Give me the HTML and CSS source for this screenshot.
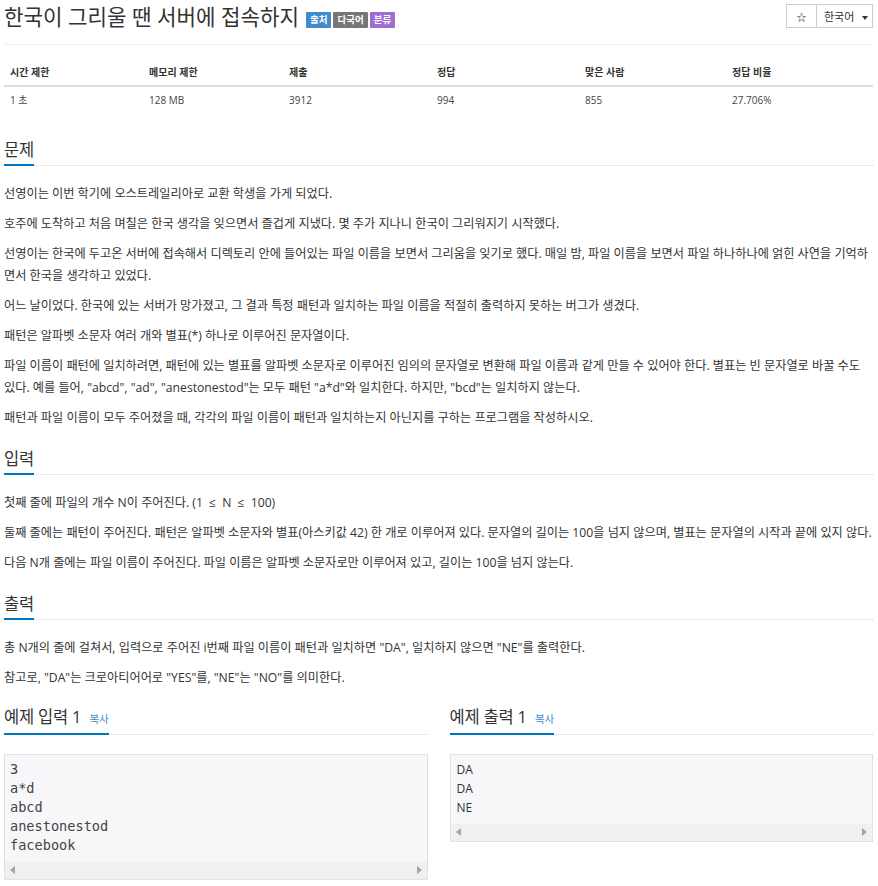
FILE: index.html
```
<!DOCTYPE html>
<html lang="ko">
<head>
    <meta charset="UTF-8">
    <meta name="viewport" content="width=device-width, initial-scale=1.0">
    <title>한국이 그리울 땐 서버에 접속하지</title>
    <link rel="stylesheet" href="styles.css">
</head>
<body>
    <div class="container">
        <div class="page-header">
            <div class="title-row">
                <h1 class="problem-title">한국이 그리울 땐 서버에 접속하지</h1>
                <span class="label label-blue">출처</span>
                <span class="label label-gray">다국어</span>
                <span class="label label-purple">분류</span>
            </div>
            <div class="btn-group">
                <button class="btn btn-star">☆</button>
                <button class="btn btn-lang">한국어 <span class="caret"></span></button>
            </div>
        </div>

        <table class="problem-info">
            <thead>
                <tr>
                    <th>시간 제한</th>
                    <th>메모리 제한</th>
                    <th>제출</th>
                    <th>정답</th>
                    <th>맞은 사람</th>
                    <th>정답 비율</th>
                </tr>
            </thead>
            <tbody>
                <tr>
                    <td>1 초</td>
                    <td>128 MB</td>
                    <td>3912</td>
                    <td>994</td>
                    <td>855</td>
                    <td>27.706%</td>
                </tr>
            </tbody>
        </table>

        <section class="section first">
            <div class="headline"><h2>문제</h2></div>
            <div class="problem-text">
                <p>선영이는 이번 학기에 오스트레일리아로 교환 학생을 가게 되었다.</p>
                <p>호주에 도착하고 처음 며칠은 한국 생각을 잊으면서 즐겁게 지냈다. 몇 주가 지나니 한국이 그리워지기 시작했다.</p>
                <p>선영이는 한국에 두고온 서버에 접속해서 디렉토리 안에 들어있는 파일 이름을 보면서 그리움을 잊기로 했다. 매일 밤, 파일 이름을 보면서 파일 하나하나에 얽힌 사연을 기억하면서 한국을 생각하고 있었다.</p>
                <p>어느 날이었다. 한국에 있는 서버가 망가졌고, 그 결과 특정 패턴과 일치하는 파일 이름을 적절히 출력하지 못하는 버그가 생겼다.</p>
                <p>패턴은 알파벳 소문자 여러 개와 별표(*) 하나로 이루어진 문자열이다.</p>
                <p>파일 이름이 패턴에 일치하려면, 패턴에 있는 별표를 알파벳 소문자로 이루어진 임의의 문자열로 변환해 파일 이름과 같게 만들 수 있어야 한다. 별표는 빈 문자열로 바꿀 수도 있다. 예를 들어, "abcd", "ad", "anestonestod"는 모두 패턴 "a*d"와 일치한다. 하지만, "bcd"는 일치하지 않는다.</p>
                <p>패턴과 파일 이름이 모두 주어졌을 때, 각각의 파일 이름이 패턴과 일치하는지 아닌지를 구하는 프로그램을 작성하시오.</p>
            </div>
        </section>

        <section class="section">
            <div class="headline"><h2>입력</h2></div>
            <div class="problem-text">
                <p>첫째 줄에 파일의 개수 N이 주어진다. (1 <span class="math">≤</span> N <span class="math">≤</span> 100)</p>
                <p>둘째 줄에는 패턴이 주어진다. 패턴은 알파벳 소문자와 별표(아스키값 42) 한 개로 이루어져 있다. 문자열의 길이는 100을 넘지 않으며, 별표는 문자열의 시작과 끝에 있지 않다.</p>
                <p>다음 N개 줄에는 파일 이름이 주어진다. 파일 이름은 알파벳 소문자로만 이루어져 있고, 길이는 100을 넘지 않는다.</p>
            </div>
        </section>

        <section class="section">
            <div class="headline"><h2>출력</h2></div>
            <div class="problem-text">
                <p>총 N개의 줄에 걸쳐서, 입력으로 주어진 i번째 파일 이름이 패턴과 일치하면 "DA", 일치하지 않으면 "NE"를 출력한다.</p>
                <p>참고로, "DA"는 크로아티어어로 "YES"를, "NE"는 "NO"를 의미한다.</p>
            </div>
        </section>

        <div class="samples">
            <section class="section sample">
                <div class="headline"><h2>예제 입력 1 <a class="copy" href="#">복사</a></h2></div>
                <div class="sample-box">
                    <pre class="sample-data">3
a*d
abcd
anestonestod
facebook</pre>
                    <div class="scrollbar"><span class="arrow-left"></span><span class="arrow-right"></span></div>
                </div>
            </section>
            <section class="section sample">
                <div class="headline"><h2>예제 출력 1 <a class="copy" href="#">복사</a></h2></div>
                <div class="sample-box">
                    <pre class="sample-data output">DA
DA
NE</pre>
                    <div class="scrollbar"><span class="arrow-left"></span><span class="arrow-right"></span></div>
                </div>
            </section>
        </div>
    </div>
</body>
</html>
```
FILE: styles.css
```
body {
    margin: 0;
    font-family: "Open Sans", "Noto Sans CJK KR", sans-serif;
    color: #333;
    background: #fff;
}
.container {
    width: 869px;
    padding: 4px 5px 0 4px;
}
.page-header {
    display: flex;
    justify-content: space-between;
    align-items: flex-start;
    padding-bottom: 14px;
    border-bottom: 1px solid #eee;
}
.title-row {
    display: flex;
    align-items: center;
}
.problem-title {
    margin: 0 7px 0 0;
    font-size: 21.2px;
    line-height: 26px;
    font-weight: normal;
    color: #333;
}
.label {
    margin: 6px 2px 0 0;
    padding: 0 4px;
    height: 16px;
    line-height: 16px;
    font-size: 9.5px;
    font-weight: bold;
    color: #fff;
    border-radius: 1px;
}
.label-blue {
    background: #428bca;
}
.label-gray {
    background: #777;
}
.label-purple {
    background: #9f6cd0;
}
.btn-group {
    display: flex;
}
.btn {
    height: 24px;
    padding: 0;
    border: 1px solid #ccc;
    background: #fff;
    color: #333;
    font-family: "Open Sans", "Noto Sans CJK KR", sans-serif;
    cursor: pointer;
}
.btn-star {
    width: 31px;
    font-size: 10px;
}
.btn-lang {
    width: 57px;
    margin-left: -1px;
    font-size: 11px;
    text-align: left;
    padding-left: 7px;
}
.caret {
    display: inline-block;
    margin-left: 5px;
    vertical-align: middle;
    border-top: 4px solid #333;
    border-left: 3.5px solid transparent;
    border-right: 3.5px solid transparent;
}
.problem-info {
    width: 869px;
    margin-top: 14px;
    border-collapse: collapse;
    table-layout: fixed;
    font-size: 10px;
}
.problem-info th,
.problem-info td {
    padding: 5px 6px;
    line-height: 16px;
    text-align: left;
}
.problem-info th {
    font-weight: bold;
    border-bottom: 2px solid #ddd;
}
.problem-info td {
    color: #444;
}
.problem-info th:nth-child(1) { width: 127px; }
.problem-info th:nth-child(2) { width: 128px; }
.problem-info th:nth-child(3) { width: 136px; }
.problem-info th:nth-child(4) { width: 136px; }
.problem-info th:nth-child(5) { width: 135px; }
.section {
    margin-top: 19px;
}
.section.first {
    margin-top: 26px;
}
.headline {
    border-bottom: 1px dotted #d6d6d6;
    margin-bottom: 17px;
}
.headline h2 {
    display: inline-block;
    margin: 0 0 -1px;
    padding-bottom: 3px;
    font-size: 16.5px;
    line-height: 22px;
    font-weight: normal;
    letter-spacing: -0.2px;
    border-bottom: 2px solid #0076c0;
}
.problem-text p {
    margin: 0 0 8px;
    font-size: 12.2px;
    line-height: 22px;
}
.math {
    padding: 0 3px;
}
.samples {
    display: grid;
    grid-template-columns: 1fr 1fr;
    column-gap: 22px;
}
.section.sample {
    margin-top: 9px;
}
.sample .headline {
    margin-bottom: 19px;
}
.copy {
    font-size: 10.5px;
    color: #428bca;
    text-decoration: none;
    letter-spacing: 0;
    margin-left: 4px;
}
.sample-box {
    border: 1px solid #e1e1e8;
    background: #f7f7f9;
}
.sample-data {
    margin: 0;
    padding: 4.5px 5px 7px;
    font-family: "DejaVu Sans Mono", monospace;
    font-size: 13.6px;
    line-height: 19px;
    color: #444;
}
.sample-data.output {
    padding-left: 6px;
    font-family: "Open Sans", sans-serif;
    font-size: 12px;
    color: #333;
}
.scrollbar {
    display: flex;
    justify-content: space-between;
    align-items: center;
    height: 17px;
    padding: 0 5px;
    background: #f0f0f0;
}
.arrow-left {
    border-right: 5px solid #a3a3a3;
    border-top: 4.5px solid transparent;
    border-bottom: 4.5px solid transparent;
}
.arrow-right {
    border-left: 5px solid #a3a3a3;
    border-top: 4.5px solid transparent;
    border-bottom: 4.5px solid transparent;
}
```
